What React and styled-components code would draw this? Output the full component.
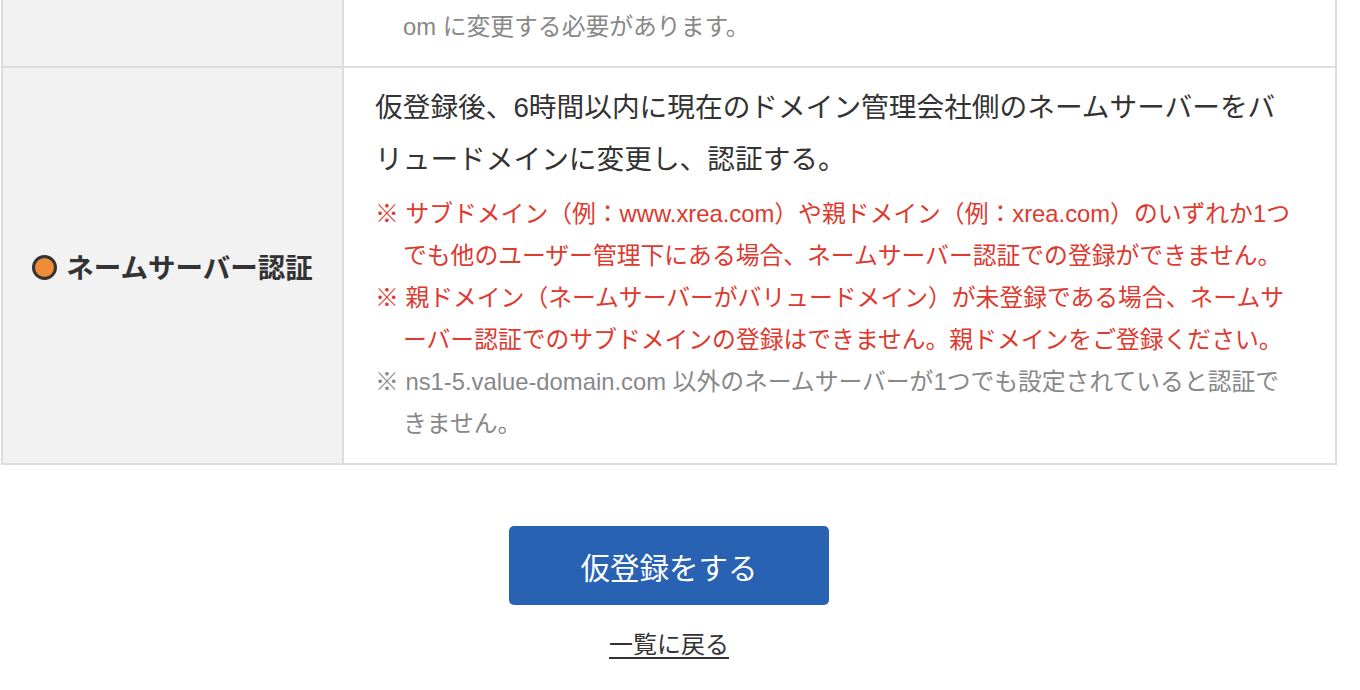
import React from "react";
import styled, { createGlobalStyle } from "styled-components";

const GlobalStyle = createGlobalStyle`
  html, body {
    margin: 0;
    padding: 0;
    background: #fff;
  }
  body {
    font-family: "Liberation Sans", "Noto Sans CJK JP", sans-serif;
    color: #333;
  }
`;

const Page = styled.div`
  width: 1336px;
  margin-left: 1px;
`;

const Table = styled.div`
  border-left: 2px solid #ddd;
  border-right: 2px solid #ddd;
`;

const Row = styled.div`
  display: grid;
  grid-template-columns: 341px 1fr;
  border-bottom: 2px solid #ddd;
`;

const Head = styled.div`
  background: #f2f2f2;
  border-right: 2px solid #ddd;
  display: flex;
  align-items: center;
  justify-content: center;
  gap: 9px;
  font-size: 27.5px;
  font-weight: bold;
  color: #333;
`;

const Dot = styled.span`
  width: 25px;
  height: 25px;
  box-sizing: border-box;
  border-radius: 50%;
  border: 3px solid #333;
  background: #ee8c3a;
  margin-top: 4px;
`;

const Body = styled.div`
  padding: ${p => (p.$top ? "6px" : "14px")} 30px 18px 31px;
`;

const Lead = styled.p`
  margin: 0 0 7px;
  font-size: 27.7px;
  line-height: 52px;
  color: #333;
`;

const Note = styled.p`
  margin: 0;
  font-size: 23.8px;
  line-height: 42px;
  padding-left: ${p => (p.$cont ? "28px" : "28px")};
  text-indent: ${p => (p.$cont ? "0" : "-28px")};
  color: ${p => (p.$red ? "#dd3a30" : "#888")};
`;

const Actions = styled.div`
  display: flex;
  flex-direction: column;
  align-items: center;
  margin-top: 61px;
`;

const Submit = styled.button`
  width: 320px;
  height: 79px;
  border: none;
  border-radius: 5px;
  background: #2962b3;
  color: #fff;
  font-family: inherit;
  font-size: 29.5px;
  cursor: pointer;
`;

const Back = styled.a`
  margin-top: 22px;
  font-size: 24px;
  line-height: 36px;
  color: #333;
  text-decoration: underline;
  text-underline-offset: 4px;
  cursor: pointer;
`;

export default function App() {
  return (
    <>
      <GlobalStyle />
      <Page>
        <Table>
          <Row>
            <Head />
            <Body $top>
              <Note $cont>om に変更する必要があります。</Note>
            </Body>
          </Row>
          <Row>
            <Head>
              <Dot />
              ネームサーバー認証
            </Head>
            <Body>
              <Lead>
                仮登録後、6時間以内に現在のドメイン管理会社側のネームサーバーをバ
                <br />
                リュードメインに変更し、認証する。
              </Lead>
              <Note $red>
                ※ サブドメイン（例：www.xrea.com）や親ドメイン（例：xrea.com）のいずれか1つ
                <br />
                でも他のユーザー管理下にある場合、ネームサーバー認証での登録ができません。
              </Note>
              <Note $red>
                ※ 親ドメイン（ネームサーバーがバリュードメイン）が未登録である場合、ネームサ
                <br />
                ーバー認証でのサブドメインの登録はできません。親ドメインをご登録ください。
              </Note>
              <Note>
                ※ ns1-5.value-domain.com 以外のネームサーバーが1つでも設定されていると認証で
                <br />
                きません。
              </Note>
            </Body>
          </Row>
        </Table>
        <Actions>
          <Submit>仮登録をする</Submit>
          <Back>一覧に戻る</Back>
        </Actions>
      </Page>
    </>
  );
}
